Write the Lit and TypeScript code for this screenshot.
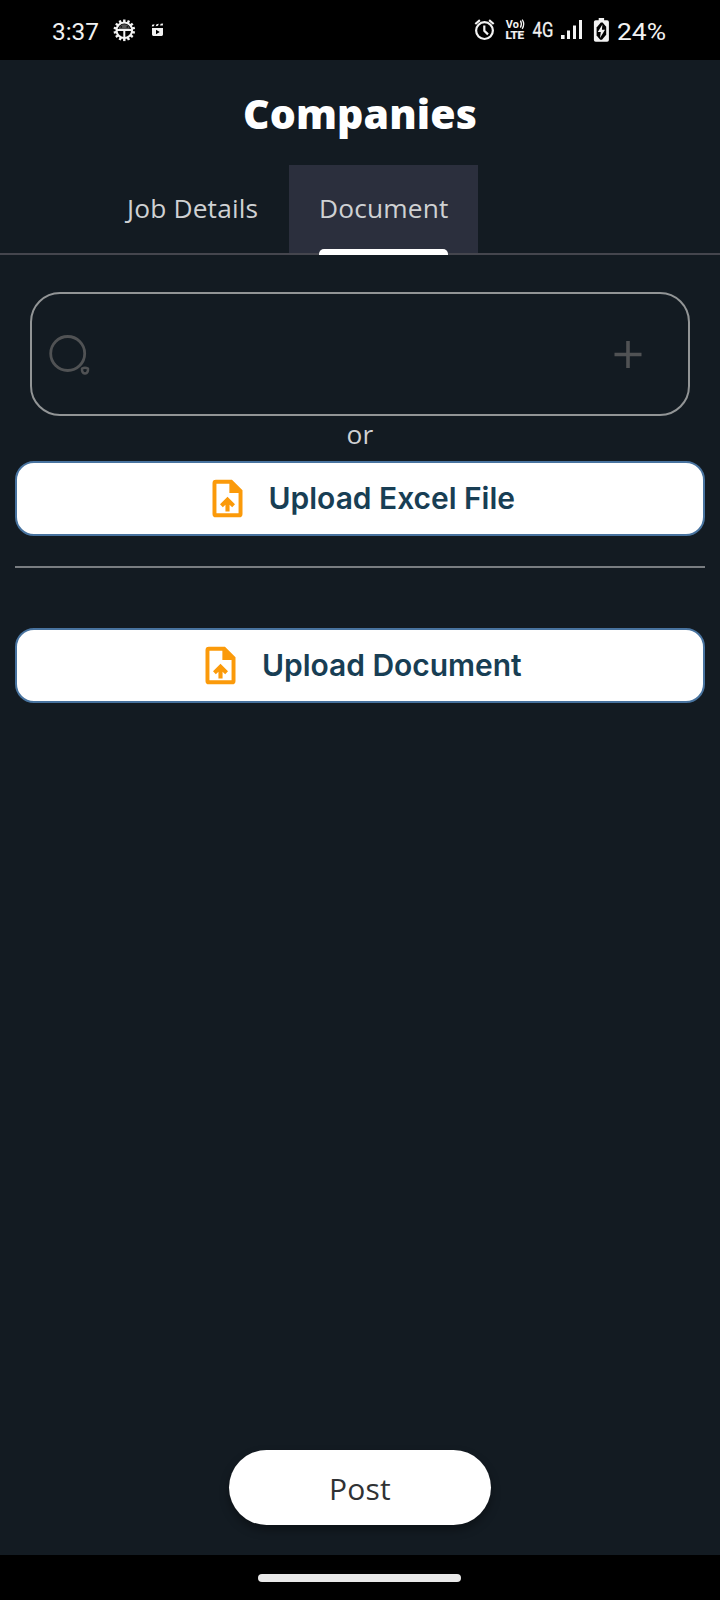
import { LitElement, html, svg, css } from "lit";
import { customElement, property } from "lit/decorators.js";

@customElement("status-bar")
class StatusBar extends LitElement {
  static styles = css`
    :host { display: block; height: 60px; background: #000; color: #f2f2f2; font-family: Roboto, sans-serif; }
    svg { display: block; }
    text { fill: #f2f2f2; }
    .clock, .percent { font-size: 24.5px; }
    .net { font-size: 20px; stroke: #f2f2f2; stroke-width: 0.3px; }
    .vo { font-size: 11px; font-weight: 700; }
    .lte { font-size: 11.5px; font-weight: 700; stroke: #f2f2f2; stroke-width: 0.2px; }
  `;
  render() {
    const teeth = Array.from({ length: 14 }, (_, i) => svg`<rect x="-1.2" y="-10.8" width="2.4" height="3.5" transform="rotate(${i * 360 / 14})" fill="#f2f2f2"/>`);
    return html`<svg width="720" height="60" viewBox="0 0 720 60">
      <text class="clock" x="52" y="40" textLength="47" lengthAdjust="spacingAndGlyphs">3:37</text>
      <g transform="translate(124.3 30.3)">
        ${teeth}
        <circle r="7.8" fill="none" stroke="#f2f2f2" stroke-width="2"/>
        <path d="M-5.5-1.4A5.5 4.6 0 0 1 5.5-1.4z" fill="#555"/>
        <path d="M-8-.2H8M0 0V8" stroke="#f2f2f2" stroke-width="2"/>
        <circle cx="-3" cy="-3.4" r=".9" fill="#111"/><circle cx="3" cy="-3.4" r=".9" fill="#111"/>
      </g>
      <g fill="#f2f2f2">
        <path fill-rule="evenodd" d="M152 28h11v6.6q0 1.4-1.4 1.4h-8.2q-1.4 0-1.4-1.4zM156 29.8v4.4l3.8-2.2z"/>
        <path d="M151.8 26.5l.3-1.7 2.4-.6-.6 2.1zM155.7 26.2l.8-2 2.3-.4-.8 2zM160 25.6l.7-1.8 2.4-.3-.3 1.9z"/>
      </g>
      <g fill="none" stroke="#f2f2f2" stroke-width="2.2">
        <circle cx="484.5" cy="30.6" r="8.4"/>
        <path d="M484.3 25.5v5.3l3.7 3.6M475.3 24l4.6-3.8M489.1 20.2l4.6 3.8"/>
      </g>
      <text class="vo" x="505.8" y="28" textLength="13" lengthAdjust="spacingAndGlyphs">Vo</text>
      <path d="M520.4 20.6q2 3.4 0 7M522.2 19.6q3 4.4 0 9.2" fill="none" stroke="#f2f2f2" stroke-width="1.3"/>
      <text class="lte" x="505.4" y="39" textLength="18.8" lengthAdjust="spacingAndGlyphs">LTE</text>
      <text class="net" x="532.5" y="36.8" textLength="20.8" lengthAdjust="spacingAndGlyphs">4G</text>
      <path d="M561 35h3.6v4H561zM567 30.5h3v8.5h-3zM573 25.5h3V39h-3zM579 20h3v19h-3z" fill="#f2f2f2"/>
      <path d="M598.7 18h5.4v2.2h3q1.8 0 1.8 1.8v18q0 1.8-1.8 1.8h-11.4q-1.8 0-1.8-1.8V22q0-1.8 1.8-1.8h3z" fill="#f2f2f2"/>
      <path d="M602.6 22.5l3.6 4.2v8l-4.2 5h-1.8l-3.6-4.2v-8l4.2-5z" fill="#000"/>
      <path d="M602.4 24.5l-4.6 7.6h3l-.8 6 5-8.4h-3.1z" fill="#f2f2f2"/>
      <text class="percent" x="617" y="40" textLength="49" lengthAdjust="spacingAndGlyphs">24%</text>
    </svg>`;
  }
}

@customElement("upload-button")
class UploadButton extends LitElement {
  @property() label = "";
  static styles = css`
    :host { display: block; }
    .button {
      box-sizing: border-box; width: 100%; height: 75px; padding: 0 0.5px 1px 0; display: flex; align-items: center; justify-content: center;
      gap: 19px; background: #fff; border: 2px solid #48739f; border-radius: 19px;
      color: #183e54; font: 600 30px/36px Inter, sans-serif; letter-spacing: -0.04px;
    }
    svg { display: block; width: 45px; height: 45px; flex: none; }
  `;
  render() {
    return html`<button class="button">
      <svg viewBox="0 0 24 24"><g fill="#fb9a0a">
        <path fill-rule="evenodd" d="M5.8 2H14.4L20 7.6V20.2a1.8 1.8 0 0 1-1.8 1.8H5.8A1.8 1.8 0 0 1 4 20.2V3.8A1.8 1.8 0 0 1 5.8 2zM6.1 4.1V19.9H17.9V9H13V4.1z"/>
        <path d="M12 11.1L8 15.1l1.5 1.5 1.4-1.3V18.9h2.2V15.3l1.4 1.3L16 15.1z"/>
      </g></svg><span>${this.label}</span></button>`;
  }
}

@customElement("app-root")
class AppRoot extends LitElement {
  static styles = css`
    :host { display: flex; flex-direction: column; height: 1600px; background: #131b22; font-family: "Open Sans", sans-serif; color: #cfd1d3; overflow: hidden; }
    h1 { margin: 0; height: 105px; box-sizing: border-box; padding-top: 25px; text-align: center; color: #fff; font-size: 41px; line-height: 56px; font-weight: 800; letter-spacing: 0.1px; }
    .tabs { display: flex; height: 88px; padding-left: 96.5px; border-bottom: 2px solid #45464e; }
    .tab { position: relative; box-sizing: border-box; height: 88px; padding: 25px 0 0 30.4px; font-size: 26.3px; line-height: 36px; letter-spacing: 0.18px; white-space: nowrap; }
    .first { width: 192px; }
    .active { width: 189.5px; background: #2b2f3d; }
    .marker { position: absolute; left: 30px; right: 30px; bottom: -2px; height: 6px; background: #fff; border-radius: 5px 5px 0 0; }
    .search { box-sizing: border-box; height: 124px; margin: 37px 30px 0; padding: 0 46px 0 17px; border: 2px solid #929596; border-radius: 30px; display: flex; align-items: center; justify-content: space-between; }
    .search svg { display: block; }
    .or { height: 45px; text-align: center; font-size: 26.3px; line-height: 36px; letter-spacing: 0.15px; }
    .upload { margin: 0 15px; }
    .rule { height: 2px; margin: 30px 15px 60px; background: #797d81; }
    .post { margin: auto auto 30px 228.6px; width: 262.6px; height: 75px; padding: 3px 0 0; border: 0; border-radius: 38px; background: #fff; box-shadow: 0 5px 10px rgba(0,0,0,.35); color: #303234; font: 400 30px/40px "Open Sans", sans-serif; letter-spacing: 0.2px; }
    .nav { display: flex; height: 45px; flex: none; background: #000; }
    .pill { width: 203px; height: 8px; margin: 18.5px 0 0 258px; border-radius: 4px; background: #e9e9e9; }
  `;
  render() {
    return html`
      <status-bar></status-bar>
      <h1>Companies</h1>
      <div class="tabs">
        <div class="tab first">Job Details</div>
        <div class="tab active">Document<div class="marker"></div></div>
      </div>
      <div class="search">
        <svg width="42" height="44" viewBox="0 0 42 44" fill="none" stroke="#505254">
          <circle cx="18.7" cy="21.5" r="17" stroke-width="2.8"/>
          <path d="M33 36.6q3-1.6 6 0 .4 4.4-3 5-3.4-.6-3-5z" stroke-width="2.5" stroke-linejoin="round"/>
        </svg>
        <svg width="28" height="28" viewBox="0 0 28 28"><path d="M.5 14.5h27M14 1v27" stroke="#505254" stroke-width="3.6"/></svg>
      </div>
      <div class="or">or</div>
      <upload-button class="upload" label="Upload Excel File"></upload-button>
      <div class="rule"></div>
      <upload-button class="upload" label="Upload Document"></upload-button>
      <button class="post">Post</button>
      <div class="nav"><div class="pill"></div></div>
    `;
  }
}
